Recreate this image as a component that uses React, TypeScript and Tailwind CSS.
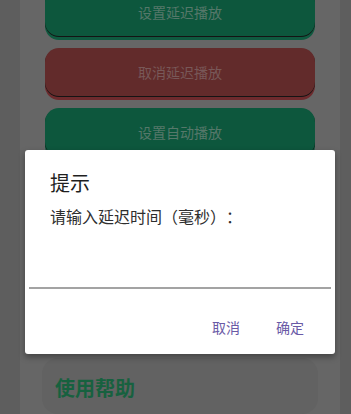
import React from "react";

const actions = [
  { label: "设置延迟播放", tone: "green" },
  { label: "取消延迟播放", tone: "red" },
  { label: "设置自动播放", tone: "green" },
  { label: "取消自动播放", tone: "red" },
  { label: "开始播放", tone: "green" },
  { label: "停止播放", tone: "red" },
];

const font = { fontFamily: '"Noto Sans CJK SC", "Noto Sans", sans-serif' };

export default function App() {
  return (
    <div
      className="relative h-[414px] w-[351px] overflow-hidden bg-[#5e5e5e]"
      style={font}
    >
      {/* Page behind the dialog (dimmed) */}
      <div className="ml-[20px] flex h-full w-[320px] flex-col bg-[#666666]">
        <div className="-mt-[12px] flex flex-col gap-[12px] px-[25px]">
          {actions.map((a) =>
            a.tone === "green" ? (
              <button
                key={a.label}
                className="flex h-[48px] w-full items-center justify-center rounded-[14px] bg-[#0d573d] text-[14px] text-[#56786a] shadow-[0_1px_0_#141414,0_4px_0_#0f5a40]"
              >
                {a.label}
              </button>
            ) : (
              <button
                key={a.label}
                className="flex h-[48px] w-full items-center justify-center rounded-[14px] bg-[#622b2b] text-[14px] text-[#785858] shadow-[0_1px_0_#141414,0_4px_0_#6d2a2d]"
              >
                {a.label}
              </button>
            )
          )}
        </div>

        <div className="mx-[22px] mt-[22px] flex-1 rounded-2xl bg-[#626262] pl-[13px] pt-[16px]">
          <h2 className="text-[20px] font-bold leading-[28px] text-[#17613f]">
            使用帮助
          </h2>
        </div>
      </div>

      {/* Dialog */}
      <div className="absolute left-[25px] top-[150px] flex w-[310px] flex-col rounded-[3px] bg-white shadow-[0_3px_6px_rgba(0,0,0,0.35)]">
        <h1 className="pl-[25px] pt-[19px] text-[20px] leading-[28px] text-[#1f1f1f]">
          提示
        </h1>
        <p className="mt-[8px] pl-[25px] text-[16px] leading-[22px] text-[#2e2e2e] [text-spacing-trim:space-all]">
          请输入延迟时间（毫秒）：
        </p>
        <div className="mx-[4px] h-[62px] border-b-2 border-[#a3a3a3]" />
        <div className="mt-[28px] flex justify-end gap-[36px] pb-[17px] pr-[31px] text-[14px] leading-[20px] text-[#6a5aa6]">
          <button>取消</button>
          <button>确定</button>
        </div>
      </div>
    </div>
  );
}
